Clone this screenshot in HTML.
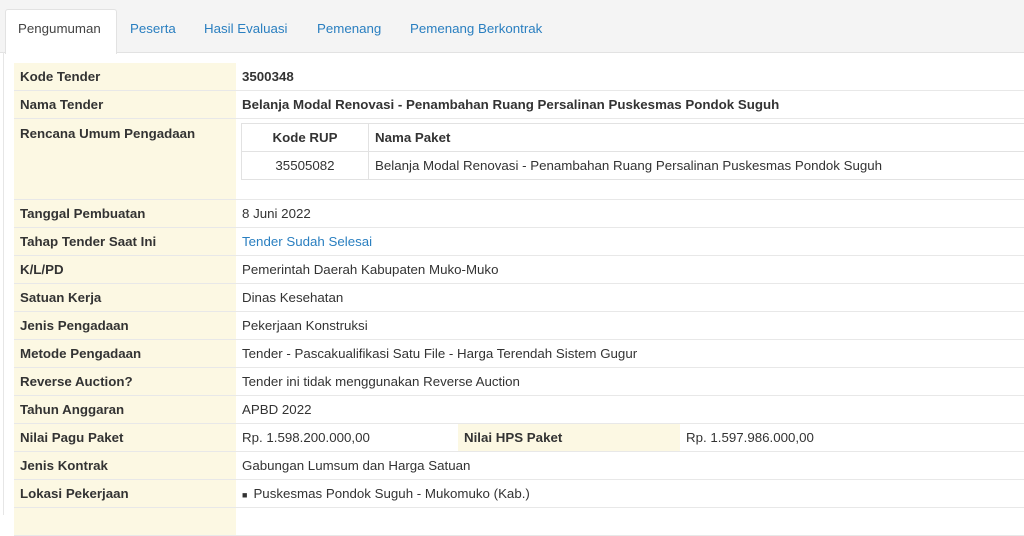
<!DOCTYPE html>
<html><head><meta charset="utf-8"><style>
body{margin:0;width:1024px;height:515px;overflow:hidden;background:#fff;font-family:"Liberation Sans",Arial,sans-serif;font-size:13.3px;color:#333}
.top{position:absolute;left:0;top:0;width:1024px;height:52px;background:#f4f4f4;border-bottom:1px solid #e2e2e2}
.tab{position:absolute;top:21px;color:#2a7fc0;font-size:13.3px}
.active{position:absolute;left:5px;top:9px;width:110px;height:44px;background:#fff;border:1px solid #e2e2e2;border-bottom:none;border-radius:3px 3px 0 0}
.panel{position:absolute;left:3px;top:52px;width:1px;height:463px;background:#e6e6e6}
table.m{position:absolute;left:14px;top:63px;width:1012px;border-collapse:collapse}
table.m td{border-bottom:1px solid #e8e8e8;padding:0 6px;height:27px;vertical-align:middle}
td.l{background:#fcf8e3;font-weight:bold;width:210px;color:#333}
a{color:#2a7fc0;text-decoration:none}
table.i{border-collapse:collapse;width:784px;margin-left:-1px}
table.i td{border:1px solid #e2e2e2;height:27px;padding:0 6px}
</style></head><body>
<div class="top"></div>
<div class="active"></div>
<div class="tab" style="left:18px;color:#444">Pengumuman</div>
<div class="tab" style="left:130px">Peserta</div>
<div class="tab" style="left:204px">Hasil Evaluasi</div>
<div class="tab" style="left:317px">Pemenang</div>
<div class="tab" style="left:410px">Pemenang Berkontrak</div>
<div class="panel"></div>
<table class="m">
<tr><td class="l">Kode Tender</td><td colspan="3" style="font-weight:bold">3500348</td></tr>
<tr><td class="l">Nama Tender</td><td colspan="3" style="font-weight:bold">Belanja Modal Renovasi - Penambahan Ruang Persalinan Puskesmas Pondok Suguh</td></tr>
<tr><td class="l" style="height:73px;vertical-align:top;padding-top:7px">Rencana Umum Pengadaan</td><td colspan="3" style="vertical-align:top;padding-top:4px;padding-right:0;height:73px">
<table class="i"><tr><td style="width:114px;text-align:center;font-weight:bold">Kode RUP</td><td style="font-weight:bold">Nama Paket</td></tr>
<tr><td style="text-align:center">35505082</td><td>Belanja Modal Renovasi - Penambahan Ruang Persalinan Puskesmas Pondok Suguh</td></tr></table></td></tr>
<tr><td class="l">Tanggal Pembuatan</td><td colspan="3">8 Juni 2022</td></tr>
<tr><td class="l">Tahap Tender Saat Ini</td><td colspan="3"><a>Tender Sudah Selesai</a></td></tr>
<tr><td class="l">K/L/PD</td><td colspan="3">Pemerintah Daerah Kabupaten Muko-Muko</td></tr>
<tr><td class="l">Satuan Kerja</td><td colspan="3">Dinas Kesehatan</td></tr>
<tr><td class="l">Jenis Pengadaan</td><td colspan="3">Pekerjaan Konstruksi</td></tr>
<tr><td class="l">Metode Pengadaan</td><td colspan="3">Tender - Pascakualifikasi Satu File - Harga Terendah Sistem Gugur</td></tr>
<tr><td class="l">Reverse Auction?</td><td colspan="3">Tender ini tidak menggunakan Reverse Auction</td></tr>
<tr><td class="l">Tahun Anggaran</td><td colspan="3">APBD 2022</td></tr>
<tr><td class="l">Nilai Pagu Paket</td><td style="width:210px">Rp. 1.598.200.000,00</td><td class="l" style="width:210px">Nilai HPS Paket</td><td>Rp. 1.597.986.000,00</td></tr>
<tr><td class="l">Jenis Kontrak</td><td colspan="3">Gabungan Lumsum dan Harga Satuan</td></tr>
<tr><td class="l">Lokasi Pekerjaan</td><td colspan="3"><span style="font-size:9px;margin-right:6px">■</span>Puskesmas Pondok Suguh - Mukomuko (Kab.)</td></tr>
<tr><td class="l"></td><td colspan="3"></td></tr>
</table>
</body></html>
